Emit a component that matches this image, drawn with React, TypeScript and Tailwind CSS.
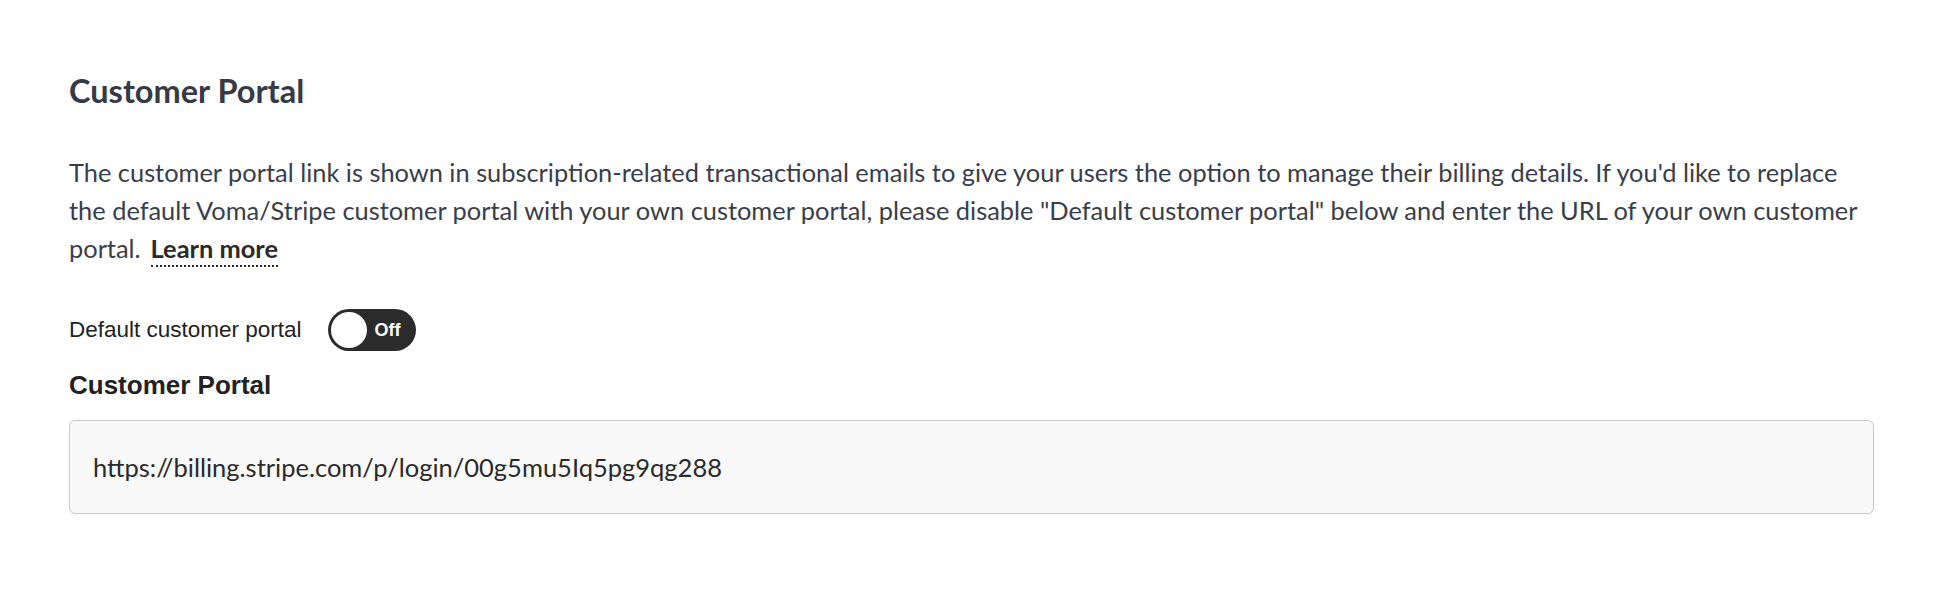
import React from "react";

export default function App() {
  return (
    <div className="w-full bg-white pl-[69px] pr-[60px] pt-[72px] pb-[90px]">
      <h2 className="text-[32.5px] leading-[38px] font-bold text-[#363a45] [font-family:Lato,'Noto_Sans',sans-serif]">
        Customer Portal
      </h2>
      <p className="mt-[43px] pr-[12px] text-[25.4px] leading-[38px] text-[#393e4a] [font-family:Lato,'Noto_Sans',sans-serif]">
        The customer portal link is shown in subscription-related transactional emails to give your users the option to manage their billing details. If you'd like to replace the default Voma/Stripe customer portal with your own customer portal, please disable "Default customer portal" below and enter the URL of your own customer portal.
        <a className="ml-[10px] font-bold text-[#2a2a2a] border-b-2 border-dotted border-[#2a2a2a] pb-[2px]">
          Learn more
        </a>
      </p>
      <div className="mt-[42px] flex items-center gap-[26px] [font-family:'Liberation_Sans',Arial,sans-serif]">
        <span className="text-[22.5px] leading-[28px] text-[#222222]">Default customer portal</span>
        <div className="flex h-[42px] w-[88px] items-center rounded-full bg-[#2b2b2b]">
          <div className="ml-[3px] h-[36px] w-[36px] rounded-full bg-white"></div>
          <span className="ml-[8px] text-[18px] font-semibold leading-none text-white">Off</span>
        </div>
      </div>
      <div className="mt-[19px] text-[26px] leading-[30px] font-bold text-[#222222] [font-family:'Liberation_Sans',Arial,sans-serif]">
        Customer Portal
      </div>
      <div className="mt-[20px] flex h-[94px] items-center rounded-[6px] border border-[#c9c9c9] bg-[#f9f9f9] px-[23px]">
        <span className="text-[25.5px] text-[#2a2a2a] [font-family:Lato,'Noto_Sans',sans-serif]">
          https://billing.stripe.com/p/login/00g5mu5Iq5pg9qg288
        </span>
      </div>
    </div>
  );
}
